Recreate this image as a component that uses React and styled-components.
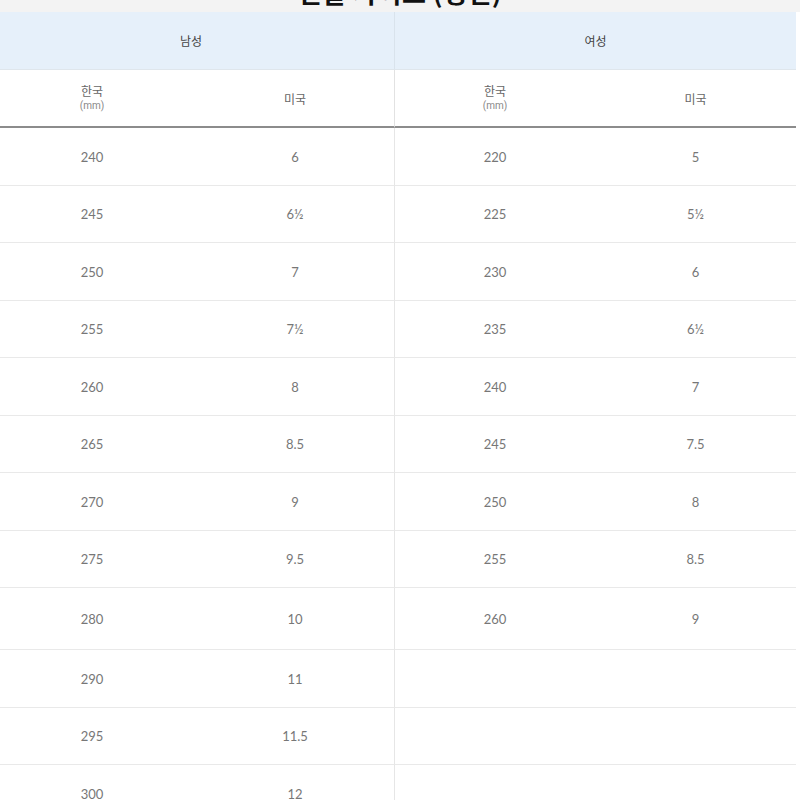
import React from "react";
import styled, { createGlobalStyle } from "styled-components";

const Global = createGlobalStyle`
  html, body { margin: 0; padding: 0; background: #ffffff; }
  body { font-family: Lato, "Noto Sans", "Noto Sans CJK KR", sans-serif; overflow: hidden; }
`;

const Page = styled.div`
  width: 800px;
  height: 800px;
  overflow: hidden;
  background: #ffffff;
`;

const TitleBand = styled.div`
  height: 12px;
  background: #f3f3f3;
  display: flex;
  align-items: flex-end;
  justify-content: center;
  overflow: hidden;
`;

const Title = styled.h2`
  margin: 0 0 7px 0;
  font-family: "Noto Sans CJK KR", "Noto Sans", sans-serif;
  font-size: 26px;
  font-weight: 700;
  line-height: 26px;
  color: #111;
  letter-spacing: 0.5px;
`;

const Table = styled.div`
  width: 808px;
  margin-left: -12px;
  display: grid;
  grid-template-columns: 208px 199px 200px 201px;
`;

const GroupHead = styled.div`
  grid-column: span 2;
  height: 57px;
  background: #e6f0fa;
  border-bottom: 1px solid #dfe6ec;
  display: flex;
  align-items: center;
  justify-content: center;
  font-family: "Noto Sans CJK KR", sans-serif;
  font-size: 12px;
  color: #444;
  ${(p) => (p.$divider ? "border-right: 1px solid #d9e3ec;" : "")}
`;

const SubHead = styled.div`
  height: 56px;
  border-bottom: 2px solid #8c8c8c;
  display: flex;
  flex-direction: column;
  align-items: center;
  justify-content: center;
  font-family: "Noto Sans CJK KR", sans-serif;
  font-size: 12px;
  color: #666;
  line-height: 15px;
  ${(p) => (p.$divider ? "border-right: 1px solid #e2e2e2;" : "")}
`;

const Unit = styled.span`
  font-family: Roboto, "Noto Sans", sans-serif;
  font-size: 10px;
  color: #888;
`;

const Cell = styled.div`
  height: ${(p) => p.$h - 1}px;
  border-bottom: 1px solid #e9e9e9;
  display: flex;
  align-items: center;
  justify-content: center;
  font-family: Lato, "Noto Sans", sans-serif;
  font-size: 13px;
  color: #777;
  ${(p) => (p.$divider ? "border-right: 1px solid #e6e6e6;" : "")}
`;

const men = [
  ["240", "6"],
  ["245", "6½"],
  ["250", "7"],
  ["255", "7½"],
  ["260", "8"],
  ["265", "8.5"],
  ["270", "9"],
  ["275", "9.5"],
  ["280", "10"],
  ["290", "11"],
  ["295", "11.5"],
  ["300", "12"],
];

const women = [
  ["220", "5"],
  ["225", "5½"],
  ["230", "6"],
  ["235", "6½"],
  ["240", "7"],
  ["245", "7.5"],
  ["250", "8"],
  ["255", "8.5"],
  ["260", "9"],
];

const heights = [58, 57, 58, 57, 58, 57, 58, 57, 62, 58, 57, 58];

export default function App() {
  return (
    <Page>
      <Global />
      <TitleBand>
        <Title>신발 사이즈 (성인)</Title>
      </TitleBand>
      <Table>
        <GroupHead $divider>남성</GroupHead>
        <GroupHead>여성</GroupHead>
        <SubHead>
          <span>한국</span>
          <Unit>(mm)</Unit>
        </SubHead>
        <SubHead $divider>미국</SubHead>
        <SubHead>
          <span>한국</span>
          <Unit>(mm)</Unit>
        </SubHead>
        <SubHead>미국</SubHead>
        {men.map((m, i) => {
          const w = women[i] || ["", ""];
          const h = heights[i];
          return (
            <React.Fragment key={i}>
              <Cell $h={h}>{m[0]}</Cell>
              <Cell $h={h} $divider>{m[1]}</Cell>
              <Cell $h={h}>{w[0]}</Cell>
              <Cell $h={h}>{w[1]}</Cell>
            </React.Fragment>
          );
        })}
      </Table>
    </Page>
  );
}
